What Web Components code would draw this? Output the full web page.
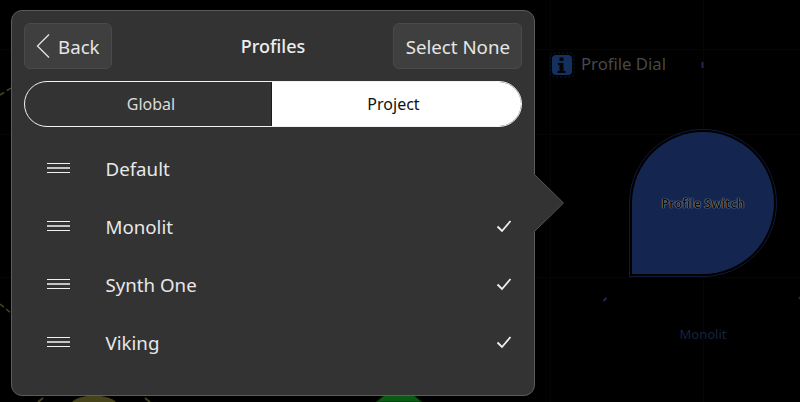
<!DOCTYPE html>
<html>
<head>
<meta charset="utf-8">
<style>
  html, body { margin: 0; background: #000; }
  body { width: 800px; height: 402px; overflow: hidden; font-family: "Noto Sans", sans-serif; }
</style>
</head>
<body>
<dial-canvas></dial-canvas>
<profile-panel title="Profiles">
  <panel-button slot="left"><svg width="15" height="26" viewBox="0 0 15 26"><path d="M13 1.500 1.500 13 13 24.500" fill="none" stroke="#e4e4e4" stroke-width="1.300"/></svg>Back</panel-button>
  <panel-button slot="right">Select None</panel-button>
  <segment-switch slot="tabs" left="Global" right="Project"></segment-switch>
  <profile-row name="Default"></profile-row>
  <profile-row name="Monolit" checked></profile-row>
  <profile-row name="Synth One" checked></profile-row>
  <profile-row name="Viking" checked></profile-row>
</profile-panel>

<script>
// dimmed canvas behind the popup, items sit at their own place on it
class DialCanvas extends HTMLElement {
  connectedCallback() {
    this.attachShadow({ mode: 'open' }).innerHTML = `
      <style>
        :host { position: absolute; left: 0; top: 0; width: 800px; height: 402px; display: block; overflow: hidden; background: #000; }
        svg { position: absolute; left: 0; top: 0; }
        .label { position: absolute; white-space: nowrap; line-height: 20px; }
        .dial { left: 581px; top: 54px; font-size: 16.700px; color: #484848; }
        .switch { left: 603px; top: 194px; width: 200px; text-align: center; font-size: 12.500px; font-weight: 600; color: #0a0a0a; text-shadow: 0 0 1px #a8a8a8, 0 0 1px #a8a8a8; }
        .mono { left: 603px; top: 324px; width: 200px; text-align: center; font-size: 13px; color: #16233f; }
      </style>
      <svg width="800" height="402" viewBox="0 0 800 402">
        <g stroke="#060606" stroke-width="1" fill="none">
          <path d="M0 49.500H800M0 134.500H800M0 277.500H800M550.500 0V402M703.500 0V129M703.500 278V402"/>
        </g>
        <g stroke="#45451f" stroke-width="1.500" stroke-dasharray="5 3" fill="none">
          <path d="M0 95 11 88M0 304 11 313"/>
        </g>
        <rect x="550" y="53" width="24" height="24" rx="4" fill="none" stroke="#0b1a36" stroke-dasharray="2 2"/>
        <rect x="552" y="55" width="20" height="20" rx="4" fill="#14305f"/>
        <path d="M559.500 57.500h4v3.500h-4zM558 63h5.500v8h2v2h-8v-2h2v-6h-1.500z" fill="#050505"/>
        <path d="M702.500 62v6" stroke="#1d2b52" stroke-width="2"/>
        <path d="M703 129.500a73.500 73.500 0 0 1 0 147H629.500V203a73.500 73.500 0 0 1 73.500-73.500z" fill="none" stroke="#10193a" stroke-width="1"/>
        <path d="M703 132a71 71 0 0 1 0 142H632V203a71 71 0 0 1 71-71z" fill="#14264f"/>
        <path d="M603.500 301l3-3M799 297l2 3" stroke="#1d2b52" stroke-width="2"/>
        <path d="M38 402l5-4M150 402l-5-4" stroke="#45451f" stroke-width="2"/>
        <path d="M72 402a23 9 0 0 1 44 0z" fill="#46421a"/>
        <path d="M376 402l21-17h4l21 17z" fill="#0b5a12" stroke="#0a2a0c"/>
      </svg>
      <span class="label dial">Profile Dial</span>
      <span class="label switch">Profile Switch</span>
      <span class="label mono">Monolit</span>
    `;
  }
}

// the popup: lies over the canvas, arrow pointing at the selected control
class ProfilePanel extends HTMLElement {
  connectedCallback() {
    this.attachShadow({ mode: 'open' }).innerHTML = `
      <style>
        :host { position: absolute; left: 11px; top: 10px; width: 524px; height: 386px; box-sizing: border-box; display: flex; flex-direction: column;
          padding: 12px 12px 0 12px; background: #333; border: 1px solid #5c5c5c; border-radius: 11px; color: #f0f0f0; }
        .head { display: flex; justify-content: space-between; align-items: center; height: 46px; position: relative; }
        h1 { position: absolute; left: 0; right: 0; margin: 0; text-align: center; font-size: 18px; font-weight: 500; color: #eee; pointer-events: none; }
        .tabs { margin-top: 12px; }
        .rows { margin-top: 12px; display: flex; flex-direction: column; }
        svg { position: absolute; left: 522px; top: 163px; overflow: visible; }
      </style>
      <div class="head"><slot name="left"></slot><h1>${this.getAttribute('title')}</h1><slot name="right"></slot></div>
      <div class="tabs"><slot name="tabs"></slot></div>
      <div class="rows"><slot></slot></div>
      <svg width="30" height="58" viewBox="0 0 30 58"><path d="M0 0 29.500 29 0 58" fill="#333" stroke="#55554d"/><path d="M-1 1V57" stroke="#333" stroke-width="2"/></svg>
    `;
  }
}

class PanelButton extends HTMLElement {
  connectedCallback() {
    this.attachShadow({ mode: 'open' }).innerHTML = `
      <style>
        :host { display: flex; align-items: center; gap: 7px; box-sizing: border-box; height: 46px; padding: 0 11px 0 11px; background: #3f3f3f; border: 1px solid #4a4a4a;
          border-radius: 6px; font-size: 18.700px; color: #e6e6e6; white-space: nowrap; }
        :host([slot="right"]) { padding: 0 11px 0 12px; }
      </style>
      <slot></slot>
    `;
  }
}

class SegmentSwitch extends HTMLElement {
  connectedCallback() {
    this.attachShadow({ mode: 'open' }).innerHTML = `
      <style>
        :host { display: flex; box-sizing: border-box; height: 46px; border: 1.500px solid #f2f2f2; border-radius: 23px; overflow: hidden; font-size: 16px; }
        div { display: flex; align-items: center; justify-content: center; }
        .off { flex: 0 0 247px; box-sizing: border-box; padding-left: 6px; color: #dcdcdc; border-right: 1px solid #1c1c1c; }
        .on { flex: 1; padding-right: 6px; background: #fff; color: #111; }
      </style>
      <div class="off">${this.getAttribute('left')}</div>
      <div class="on">${this.getAttribute('right')}</div>
    `;
  }
}

class ProfileRow extends HTMLElement {
  connectedCallback() {
    const check = this.hasAttribute('checked')
      ? '<svg class="check" width="16" height="14" viewBox="0 0 16 14"><path d="M1.500 7.500 6 12 14.500 2" fill="none" stroke="#f0f0f0" stroke-width="1.800"/></svg>'
      : '';
    this.attachShadow({ mode: 'open' }).innerHTML = `
      <style>
        :host { display: flex; align-items: center; height: 58px; font-size: 18.700px; color: #e8e8e8; }
        .grip { flex: none; width: 23px; height: 10px; margin-left: 23px; border-top: 1px solid #f0f0f0; border-bottom: 1px solid #f0f0f0; position: relative; box-sizing: border-box; }
        .grip::after { content: ""; position: absolute; left: 0; right: 0; top: 3px; height: 2px; background: #c4c4c4; }
        .name { margin-left: 35.500px; flex: 1; }
        .check { margin-right: 10px; }
      </style>
      <span class="grip"></span><span class="name">${this.getAttribute('name')}</span>${check}
    `;
  }
}

customElements.define('dial-canvas', DialCanvas);
customElements.define('profile-panel', ProfilePanel);
customElements.define('panel-button', PanelButton);
customElements.define('segment-switch', SegmentSwitch);
customElements.define('profile-row', ProfileRow);
</script>
</body>
</html>
